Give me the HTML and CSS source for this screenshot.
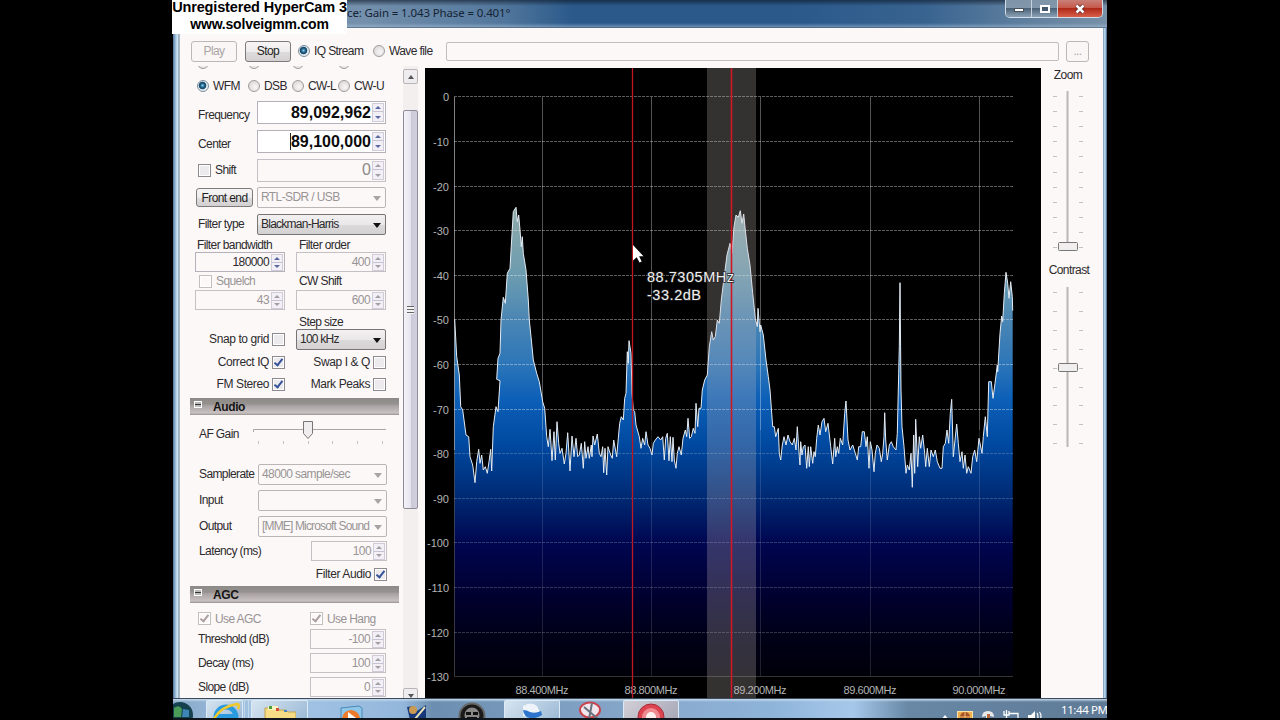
FILE: index.html
```html
<!DOCTYPE html>
<html lang="en">
<head>
  <meta charset="UTF-8">
  <title>SDR Receiver</title>
  <link rel="stylesheet" href="styles.css">
</head>
<body>

<div class="desktop">
  <div class="watermark">
    <div class="wm-name">Unregistered HyperCam 3</div>
    <div class="wm-site">www.solveigmm.com</div>
  </div>

  <div class="window">
    <div class="titlebar">
      <span class="title">ce: Gain = 1.043 Phase = 0.401°</span>
      <div class="win-buttons">
        <span class="win-btn"><svg width="12" height="8"><rect x="1.5" y="3.500" width="9" height="3" fill="#fff" stroke="#49535f"/></svg></span>
        <span class="win-btn"><svg width="12" height="10"><rect x="2" y="2" width="8" height="6" fill="#46586c" stroke="#fff" stroke-width="2"/></svg></span>
        <span class="win-btn close"><svg width="12" height="10"><path d="M2.500 1.500L9.500 8.500M9.500 1.500L2.500 8.500" stroke="#5b2020" stroke-width="4"/><path d="M2.500 1.500L9.500 8.500M9.500 1.500L2.500 8.500" stroke="#fff" stroke-width="2.500"/></svg></span>
      </div>
    </div>

    <div class="client">
      <div class="toolbar">
        <button class="btn disabled">Play</button>
        <button class="btn stop">Stop</button>
        <label class="opt iq"><i class="radio on"></i>IQ Stream</label>
        <label class="opt wave"><i class="radio"></i>Wave file</label>
        <div class="path-box"></div>
        <button class="btn browse disabled">...</button>
      </div>

      <div class="main">
        <div class="panel">
          <div class="modes cut"><i class="radio"></i><i class="radio"></i><i class="radio"></i><i class="radio"></i></div>
          <div class="modes">
            <label class="opt"><i class="radio on"></i>WFM</label>
            <label class="opt"><i class="radio"></i>DSB</label>
            <label class="opt"><i class="radio"></i>CW-L</label>
            <label class="opt"><i class="radio"></i>CW-U</label>
          </div>
          <div class="row tall"><span class="low">Frequency</span><div class="num big">89,092,962<i class="spin"></i></div></div>
          <div class="row tall"><span class="low">Center</span><div class="num big"><b class="caret"></b>89,100,000<i class="spin"></i></div></div>
          <div class="row shift"><label class="opt"><i class="check"></i>Shift</label><div class="num big off">0<i class="spin"></i></div></div>
          <div class="row front"><button class="btn small">Front end</button><div class="select off">RTL-SDR / USB</div></div>
          <div class="row"><span>Filter type</span><div class="select">Blackman-Harris</div></div>

          <div class="pair names"><span>Filter bandwidth</span><span>Filter order</span></div>
          <div class="pair"><div class="num">180000<i class="spin"></i></div><div class="num off">400<i class="spin"></i></div></div>
          <div class="pair squelch"><label class="opt off"><i class="check"></i>Squelch</label><span>CW Shift</span></div>
          <div class="pair"><div class="num off">43<i class="spin"></i></div><div class="num off">600<i class="spin"></i></div></div>
          <div class="pair names step"><span></span><span>Step size</span></div>
          <div class="pair"><label class="opt end">Snap to grid<i class="check"></i></label><div class="select">100 kHz</div></div>
          <div class="pair flags first"><label class="opt end">Correct IQ<i class="check on"></i></label><label class="opt end">Swap I &amp; Q<i class="check"></i></label></div>
          <div class="pair flags"><label class="opt end">FM Stereo<i class="check on"></i></label><label class="opt end">Mark Peaks<i class="check"></i></label></div>

          <div class="section audio"><i class="fold"></i>Audio</div>
          <div class="row aud gain">
            <span>AF Gain</span>
            <svg class="gain-slider" width="134" height="38" viewBox="253 416 134 38">
              <path d="M253.500 433V430.500H386" fill="none" stroke="#aaa6a6"/>
              <path d="M258.500 442v3M283.500 442v3M308.500 442v3M332.500 442v3M357.500 442v3M382.500 442v3" stroke="#c9c4c4"/>
              <path d="M303.500 422.500h9v12l-4.500 5l-4.500-5z" fill="#efeded" stroke="#777"/>
            </svg>
          </div>
          <div class="row aud"><span>Samplerate</span><div class="select off">48000 sample/sec</div></div>
          <div class="row aud"><span>Input</span><div class="select off"></div></div>
          <div class="row aud"><span>Output</span><div class="select off device">[MME] Microsoft Sound</div></div>
          <div class="row aud latency"><span>Latency (ms)</span><div class="num off">100<i class="spin"></i></div></div>
          <div class="row aud filter-audio"><label class="opt end">Filter Audio<i class="check on"></i></label></div>

          <div class="section agc"><i class="fold"></i>AGC</div>
          <div class="row use"><label class="opt off"><i class="check on"></i>Use AGC</label><label class="opt off hang"><i class="check on"></i>Use Hang</label></div>
          <div class="row level"><span>Threshold (dB)</span><div class="num off">-100<i class="spin"></i></div></div>
          <div class="row level"><span>Decay (ms)</span><div class="num off">100<i class="spin"></i></div></div>
          <div class="row level"><span>Slope (dB)</span><div class="num off">0<i class="spin"></i></div></div>
        </div>

        <div class="scrollbar">
          <div class="sb-btn up"></div>
          <div class="sb-thumb"><i class="grip"></i></div>
          <div class="sb-btn down"></div>
        </div>

        <svg class="spectrum" id="spectrum" width="616" height="630" viewBox="425 68 616 630">
          <defs>
            <linearGradient id="level" gradientUnits="userSpaceOnUse" x1="0" y1="97" x2="0" y2="676">
              <stop offset="0" stop-color="#c8d0c0"/>
              <stop offset="0.190" stop-color="#8fabaa"/>
              <stop offset="0.310" stop-color="#6b9bb0"/>
              <stop offset="0.385" stop-color="#4a86b4"/>
              <stop offset="0.460" stop-color="#2d76b8"/>
              <stop offset="0.520" stop-color="#0d60b8"/>
              <stop offset="0.600" stop-color="#0049a0"/>
              <stop offset="0.690" stop-color="#002a74"/>
              <stop offset="0.770" stop-color="#000650"/>
              <stop offset="0.860" stop-color="#000030"/>
              <stop offset="0.930" stop-color="#000018"/>
              <stop offset="1" stop-color="#00000a"/>
            </linearGradient>
          </defs>
          <polygon id="fill" fill="url(#level)"/>
          <g id="grid"></g>
          <polyline id="trace" fill="none" stroke="#e4ecf4" stroke-width="1"/>
          <rect x="707" y="68" width="49" height="630" fill="#c8bcbc" opacity="0.26"/>
          <path d="M632.500 68V698" stroke="#c01822" stroke-width="1.300"/>
          <path d="M731.500 68V698" stroke="#d01824" stroke-width="1.600"/>
          <g class="readout">
            <text x="647" y="282" textLength="87">88.7305MHz</text>
            <text x="647" y="300" textLength="54">-33.2dB</text>
          </g>
          <path d="M633 245v15.500l3.700-3.300 2.800 5.300 2.200-1-2.600-5.200h4.400z" fill="#fff"/>
        </svg>

        <div class="sliders">
          <span>Zoom</span>
          <svg id="zoomSlider" width="40" height="172" viewBox="1048 86 40 172"></svg>
          <span>Contrast</span>
          <svg id="contrastSlider" width="40" height="172" viewBox="1048 282 40 172"></svg>
        </div>
      </div>
    </div>
  </div>

  <div class="taskbar">
    <svg class="start" width="20" height="20"><circle cx="7" cy="15" r="13" fill="#16414f"/><path d="M1 8q5-4 8 1l-1 8H1z" fill="#4c9a58"/><path d="M10 9l6 1v7h-7z" fill="#3d86b5"/></svg>
    <div class="task lit ie"><svg width="36" height="20"><circle cx="19" cy="16" r="10" fill="none" stroke="#2b9be0" stroke-width="5"/><path d="M11 15h17" stroke="#2b9be0" stroke-width="4"/><path d="M6 20Q12 6 30 3q3 0 1 5" fill="none" stroke="#f1c92c" stroke-width="2.500"/></svg></div>
    <div class="stack"></div>
    <div class="task lit files"><svg width="32" height="20"><path d="M1 20V7h9l2 2h10l2 2h8v9z" fill="#f6dc85" stroke="#c4a24c"/><path d="M4 5h10v4H4z" fill="#fff3c0"/><path d="M5 5h3v3H5z" fill="#4a9c3c"/><path d="M12 7h3v3h-3z" fill="#d94a3a"/><path d="M20 9h3v2h-3z" fill="#4a88c8"/></svg></div>
    <svg class="ico wmp" width="26" height="20"><path d="M2 20V8l18-2 3 2v12z" fill="#8ec6e8" stroke="#4989b8"/><circle cx="12" cy="19" r="9" fill="#ee7a2b"/><path d="M9 12l8 6H9z" fill="#fff"/></svg>
    <svg class="ico person" width="22" height="20"><path d="M1 7l6-1 4 5 9-6v15H4z" fill="#16387a"/><circle cx="7" cy="10" r="4" fill="#c99a52"/><path d="M9 19L19 7" stroke="#e6e1b8" stroke-width="2"/></svg>
    <svg class="ico skull" width="28" height="20"><circle cx="14" cy="16" r="12.500" fill="#1a1a1a" stroke="#666" stroke-width="2"/><circle cx="14" cy="15" r="7.500" fill="#888"/><path d="M8 12h5v3H8zM15 12h5v3h-5zM9 17h10v3H9z" fill="#111"/></svg>
    <div class="task lit sdr"><svg width="24" height="20"><path d="M3 5q8-5 14 0l4 8q-8 5-18 2z" fill="#eef4fa"/><path d="M3 9q4 0 7 2 5 2 11-1l1 4q-6 4-12 3-6-1-7-8z" fill="#2c74cc"/></svg></div>
    <svg class="ico snip" width="26" height="20"><ellipse cx="13" cy="10" rx="10" ry="7.500" fill="#f0e6ec" stroke="#c8434c" stroke-width="2"/><path d="M7 7l14 12M15 3l-3 16" stroke="#68727e" stroke-width="2"/></svg>
    <div class="task lit rec"><svg width="28" height="20"><circle cx="14" cy="16" r="13" fill="#dd4450" stroke="#a82c38"/><circle cx="14" cy="16" r="9" fill="#ee8a90"/><circle cx="14" cy="16" r="5" fill="#fff0f0"/></svg></div>
    <div class="tray">
      <svg width="8" height="20"><path d="M0 20l4-5 4 5z" fill="#fff"/></svg>
      <svg width="16" height="20"><rect x="0.500" y="11.500" width="15" height="10" fill="#eeb04e" stroke="#fbe3a6"/><circle cx="8" cy="17" r="5" fill="#a8532a"/><path d="M3 17h10M8 12v8" stroke="#f4c46a"/></svg>
      <svg width="14" height="20"><path d="M1 17q0-6 6-6t6 6l-4-1v4H5v-4z" fill="#e8e8e8"/><path d="M6 14h3v6H6z" fill="#b86a3c"/></svg>
      <svg width="16" height="20"><path d="M1 11v4h5v-4M3.500 10v10M6 13.500h9v6H8" fill="none" stroke="#fff" stroke-width="1.300"/></svg>
      <svg width="16" height="20"><path d="M1 15h3l4-4v9H1z" fill="#fff"/><path d="M10 13q2 3 0 7M12.500 12q3 4 0 8" fill="none" stroke="#fff" stroke-width="1.200"/></svg>
    </div>
    <div class="clock">11:44 PM</div>
  </div>
</div>

<script src="script.js"></script>
</body>
</html>
```
FILE: styles.css
```css
body {
  margin: 0;
  width: 1280px;
  height: 720px;
  overflow: hidden;
  background: #000;
  font-family: "Liberation Sans", Arial, sans-serif;
  font-size: 12px;
  letter-spacing: -0.6px;
  color: #2c2a2c;
}
* {
  box-sizing: border-box;
}
svg {
  display: block;
  flex: none;
}
.desktop {
  position: relative;
  width: 934px;
  height: 720px;
  margin-left: 173px;
}
.watermark {
  position: absolute;
  left: -1px;
  top: 0;
  width: 175px;
  height: 34px;
  background: #fff;
  color: #000;
  font-weight: bold;
  text-align: center;
  white-space: nowrap;
  letter-spacing: 0;
}
.wm-name {
  font-size: 14.5px;
  line-height: 15px;
  letter-spacing: -0.15px;
}
.wm-site {
  font-size: 14px;
  line-height: 19px;
  letter-spacing: -0.2px;
}

/* window */
.window {
  height: 698px;
  padding: 0 4px 0 7px;
  background: linear-gradient(to right, #54779b 0, #a9cbe4 3px, #dcecf6 5px, #5b7693 6px, #fcf8f8 7px, #fcf8f8 929px, #5d7892 930px, #bcdcf2 931px, #8fb4d2 933px, #2b4257 934px);
}
.titlebar {
  display: flex;
  justify-content: space-between;
  height: 28px;
  margin: 0 -4px 0 -7px;
  padding: 0 4px 0 174px;
  background: linear-gradient(rgba(10, 20, 35, 0.6) 0, rgba(10, 20, 35, 0) 6px, rgba(255, 255, 255, 0) 23px, rgba(170, 195, 220, 0.5) 27px, #33485e 28px), linear-gradient(to right, #7490ac 0, #7490ac 190px, #52779c 330px, #2a598a 400px, #2a598a 620px, #386390 750px, #5f7f9e 850px, #7890a8 934px);
}
.title {
  padding-top: 5px;
  font-family: "Noto Sans", sans-serif;
  font-size: 11.5px;
  line-height: 16px;
  letter-spacing: -0.13px;
  color: #152334;
}
.win-buttons {
  display: flex;
  height: 18px;
  border: 1px solid #d2dce6;
  border-top: 0;
  border-radius: 0 0 5px 5px;
  overflow: hidden;
}
.win-btn {
  display: flex;
  align-items: center;
  justify-content: center;
  width: 26px;
  border-right: 1px solid #c8d2dc;
  background: linear-gradient(#7e94a8 0, #8297aa 45%, #4b6277 50%, #8ba2b6 100%);
}
.win-btn.close {
  width: 44px;
  border: 0;
  background: linear-gradient(#c98078 0, #c65a4c 45%, #b02818 50%, #d8604a 100%);
}
.client {
  height: 670px;
  background: #fcf8f8;
}

/* toolbar */
.toolbar {
  display: flex;
  align-items: center;
  height: 38px;
  padding: 8px 14px 0 11px;
}
.btn {
  flex: none;
  width: 46px;
  height: 21px;
  padding: 0;
  border: 1px solid #7d7a7c;
  border-radius: 3px;
  background: linear-gradient(#f6f4f4 0, #eeecec 50%, #dedcdc 51%, #d2d0d0 100%);
  font: inherit;
  letter-spacing: inherit;
  color: #222;
}
.btn.disabled {
  border-color: #bdb8b8;
  background: #faf6f6;
  color: #aaa5a5;
}
.btn.stop {
  margin-left: 8px;
}
.btn.browse {
  width: 23px;
  margin-left: 7px;
}
.btn.small {
  width: 57px;
  height: 19px;
}
.opt {
  display: flex;
  align-items: center;
  gap: 4px;
  white-space: nowrap;
}
.opt.iq {
  width: 75px;
  margin-left: 7px;
}
.opt.wave {
  width: 73px;
}
.path-box {
  flex: 1;
  height: 19px;
  border: 1px solid #c2bdbd;
  border-radius: 2px;
}
.radio {
  flex: none;
  width: 12px;
  height: 12px;
  border: 1px solid #a09c9c;
  border-radius: 50%;
  background: radial-gradient(circle at 60% 60%, #f8f6f6, #d2d0d0);
}
.radio.on {
  border-color: #7d8e9c;
  background: radial-gradient(circle at 45% 45%, #8fd0ee 0, #1f6288 2px, #17476a 3.400px, #e4ecf0 4.200px);
}
.check {
  flex: none;
  position: relative;
  width: 13px;
  height: 13px;
  border: 1px solid #8d8b8f;
  background: #eceaec;
  box-shadow: inset 0 0 0 1px #fff;
}
.check.on::after {
  content: "";
  position: absolute;
  left: 3px;
  top: 0;
  width: 3px;
  height: 7px;
  border: solid #35529c;
  border-width: 0 2px 2px 0;
  transform: rotate(38deg);
}
.off {
  color: #989494;
}
.off .check {
  border-color: #c4bfbf;
  background: #fcf8f8;
}
.off .check.on::after {
  border-color: #aaa0a4;
}

/* left panel */
.main {
  display: flex;
  height: 632px;
}
.panel {
  width: 209px;
  margin-left: 10px;
  overflow: hidden;
}
.modes {
  display: grid;
  grid-template-columns: 51px 44px 46px auto;
  align-items: center;
  height: 24px;
  padding-left: 7px;
}
.modes.cut {
  grid-auto-rows: 3px;
  align-items: end;
  height: 3px;
  margin-bottom: 5px;
  overflow: hidden;
}
.row,
.pair {
  display: flex;
  align-items: center;
  justify-content: space-between;
  height: 26px;
  padding: 0 13px 0 8px;
  white-space: nowrap;
}
.row.tall {
  height: 29px;
}
.low {
  padding-top: 5px;
}
.row.shift {
  height: 28px;
}
.row.front {
  height: 27px;
  padding-left: 6px;
}
.pair {
  height: 20px;
  padding-left: 5px;
}
.pair > * {
  width: 90px;
}
.pair.names {
  height: 15px;
}
.names span,
.squelch span {
  padding-left: 2px;
}
.names span + span,
.squelch span {
  padding-left: 3px;
}
.pair.squelch {
  height: 18px;
}
.squelch .opt {
  padding-left: 4px;
}
.pair.step {
  margin-top: 4px;
}
.pair.flags {
  height: 22px;
}
.pair.flags.first {
  margin-top: 2px;
}
.opt.end {
  justify-content: flex-end;
  gap: 3px;
  letter-spacing: -0.4px;
}
.num {
  display: flex;
  align-items: center;
  justify-content: flex-end;
  width: 76px;
  height: 20px;
  padding-right: 1px;
  border: 1px solid #b4b1ba;
}
.pair .num {
  width: 90px;
}
.num.off {
  border-color: #c4c0c6;
}
.num.big {
  width: 129px;
  height: 23px;
  font-size: 16px;
  line-height: 18px;
  font-weight: bold;
  letter-spacing: 0;
  color: #0c0c0c;
  background: #fff;
}
.num.big.off {
  background: none;
  font-weight: normal;
  color: #8c8888;
}
.caret {
  width: 1px;
  height: 17px;
  background: #222;
}
.spin {
  position: relative;
  width: 12px;
  height: 17px;
  margin-left: 2px;
  border: 1px solid #cfccd8;
  background: linear-gradient(#f2f0f6 7px, #c6c3d0 7px, #c6c3d0 8px, #f2f0f6 8px);
}
.big .spin {
  height: 19px;
  margin-left: 1px;
}
.spin::before,
.spin::after {
  content: "";
  position: absolute;
  left: 2px;
  top: 2px;
  border: 3px solid transparent;
  border-top-width: 0;
  border-bottom: 3px solid #5a68a0;
}
.spin::after {
  top: auto;
  bottom: 2px;
  border: 3px solid transparent;
  border-bottom-width: 0;
  border-top: 3px solid #5a68a0;
}
.off .spin::before {
  border-bottom-color: #a39ea4;
}
.off .spin::after {
  border-top-color: #a39ea4;
}
.select {
  position: relative;
  width: 129px;
  height: 21px;
  padding: 0 3px;
  border: 1px solid #777476;
  border-radius: 2px;
  background: linear-gradient(#f2f0f0 0, #eae8e8 50%, #dcdada 51%, #d3d1d1 100%);
  line-height: 19px;
  letter-spacing: -0.75px;
}
.pair .select {
  width: 90px;
}
.select::after {
  content: "";
  position: absolute;
  right: 4px;
  top: 8px;
  border: 4px solid transparent;
  border-bottom-width: 0;
  border-top: 5px solid #111;
}
.select.off {
  border-color: #bbb6b6;
  background: #fcf8f8;
  letter-spacing: -0.6px;
}
.select.off.device {
  letter-spacing: -0.84px;
}
.select.off::after {
  border-top-color: #a8a3a5;
}
.section {
  position: relative;
  height: 17px;
  padding: 1px 0 0 23px;
  background: linear-gradient(#8b8a86 0, #96918f 6px, #aba4a4 8px, #c9c1c1 15px, #96918f 17px);
  font-size: 12px;
  line-height: 16px;
  font-weight: bold;
  letter-spacing: -0.4px;
  color: #151515;
}
.section.audio {
  margin-top: 3px;
}
.section.agc {
  margin-top: 1px;
}
.fold {
  position: absolute;
  left: 4px;
  top: 3px;
  width: 8px;
  height: 7px;
  border: 1px solid #fff;
  background: linear-gradient(#bbb 2px, #333 2px, #333 3px, #bbb 3px);
}
.row.aud {
  padding: 0 12px 0 9px;
}
.row.gain {
  height: 38px;
  margin-bottom: 8px;
}
.row.latency {
  height: 24px;
}
.row.filter-audio {
  height: 22px;
  justify-content: flex-end;
}
.row.use {
  height: 24px;
  padding-top: 7px;
}
.use .hang {
  width: 76px;
}
.row.level {
  height: 24px;
}
.scrollbar {
  display: flex;
  flex-direction: column;
  width: 15px;
  margin: 0 7px 0 4px;
  padding-top: 3px;
  overflow: hidden;
  background: #f3efef;
}
.sb-btn {
  flex: none;
  display: flex;
  align-items: center;
  justify-content: center;
  height: 15px;
  border: 1px solid #b8b4b8;
  border-radius: 2px;
  background: #eeecee;
}
.sb-btn::after {
  content: "";
  border: 3px solid transparent;
  border-top-width: 0;
  border-bottom: 4px solid #555;
}
.sb-btn.down::after {
  border: 3px solid transparent;
  border-bottom-width: 0;
  border-top: 4px solid #555;
}
.sb-thumb {
  flex: none;
  display: flex;
  align-items: center;
  justify-content: center;
  height: 399px;
  margin: 26px 0 179px;
  border: 1px solid #8f8c98;
  border-radius: 2px;
  background: linear-gradient(to right, #f4f2f8 0, #e6e4ee 50%, #cbc9d8 55%, #d2d0de 100%);
}
.grip {
  width: 7px;
  height: 8px;
  background: repeating-linear-gradient(#666 0, #666 1px, #f4f4f4 1px, #f4f4f4 3px);
}

/* spectrum */
.spectrum {
  margin-top: 2px;
  background: #000;
  letter-spacing: 0;
}
.axis {
  fill: #b4b4b4;
  font-size: 11px;
}
.readout {
  fill: #f0f0f0;
  font-size: 14.5px;
  stroke: #222;
  stroke-width: 1.5px;
  paint-order: stroke;
}
.sliders {
  display: flex;
  flex-direction: column;
  align-items: center;
  flex: 1;
  padding: 2px 8px 0 0;
}
.sliders span {
  height: 18px;
  line-height: 14px;
}
.sliders span + svg + span {
  height: 24px;
  padding-left: 2px;
  line-height: 25px;
}

/* taskbar */
.taskbar {
  display: flex;
  height: 22px;
  padding-top: 1px;
  border-top: 1px solid #3b4b5d;
  border-bottom: 2px solid #10151c;
  background: linear-gradient(#c6daea 0, rgba(140, 170, 200, 0) 3px), linear-gradient(to right, #87a8c8 0, #a6c6e6 90px, #93b7db 230px, #6c8eb0 260px, #85a6c8 450px, #8fb4da 600px, #a6c8ea 680px, #6888a6 735px, #5e7a96 934px);
  overflow: hidden;
}
.task {
  flex: none;
  display: flex;
  justify-content: center;
  border: 1px solid #dceaf6;
  border-bottom: 0;
  border-radius: 2px 2px 0 0;
  background: linear-gradient(135deg, #d6e4f0, #9dbbd6);
}
.task.rec {
  background: linear-gradient(135deg, #d2cfd6, #a8a8b8);
}
.start {
  margin-right: 13px;
}
.task.ie {
  width: 37px;
}
.stack {
  width: 5px;
  margin: 0 1px 0 1px;
  border: solid #c2d8ea;
  border-width: 0 1px;
}
.task.files {
  width: 57px;
  margin-left: 1px;
}
.ico.wmp {
  margin-left: 31px;
}
.ico.person {
  margin-left: 41px;
}
.ico.skull {
  margin-left: 30px;
}
.task.sdr {
  width: 56px;
  margin-left: 18px;
}
.ico.snip {
  margin-left: 17px;
}
.task.rec {
  width: 56px;
  margin-left: 20px;
}
.tray {
  display: flex;
  gap: 8px;
  margin-left: auto;
}
.clock {
  width: 46px;
  margin-left: 18px;
  font-family: "Noto Sans", sans-serif;
  font-size: 11.5px;
  line-height: 19px;
  letter-spacing: -0.4px;
  color: #fff;
  white-space: nowrap;
}
```
FILE: script.js
```js
const NS = 'http://www.w3.org/2000/svg';

// sweep samples, x/y in thirds of a pixel from each block's origin
const sweep = [
  { x: 420, y: 190, pts: '104,388 110,500 118,555 122,650 128,660 138,735 146,740 150,800 158,825 165,878 170,815 176,778 180,820 185,795 190,840 196,830 202,850 207,815 212,778 215,843 220,710 228,650 234,665 240,572 230,568 234,505 240,490 243,390 250,322 256,340 262,250 270,235 276,130 280,65 288,52 292,95 296,75 300,120 304,170 307,140 310,190 318,240 325,330 328,390 333,440 340,510 350,550 358,575 368,635 374,655 380,740 385,770 390,718 396,812 402,725 406,810 411,695 416,760 420,790 426,775 433,822 438,790 443,728 450,843 456,738 462,800 468,745 473,800 478,795 484,760 490,835 494,755 498,805 504,770 508,805 514,765 516,800 519,738 524,765 532,732 538,790 543,800 548,770 551,848 555,775 560,855 564,770 572,795 577,805 581,750 590,800 595,745 599,700 604,680 610,690 614,625 618,610 622,485 625,520 627,452 633,490 636,610 640,660' },
  { x: 630, y: 190, pts: '14,665 18,705 28,740 33,775 38,745 44,765 48,725 54,765 60,775 66,795 70,760 76,750 84,740 92,750 98,740 103,810 107,745 112,730 117,812 121,740 126,815 129,742 133,810 138,835 142,790 147,770 154,795 159,745 166,720 170,740 174,685 179,745 184,740 190,715 195,730 198,640 203,710 207,655 213,655 217,600 224,570 232,555 238,470 245,425 250,450 256,440 262,390 268,400 274,330 282,265 291,195 300,160 306,190 312,110 318,75 325,82 331,62 336,100 341,72 346,120 352,175 360,225 368,310 376,385 382,410 384,355 390,425 392,405 400,435 408,510 415,560 420,600 428,710 433,710 437,740 445,715 448,790 452,810 457,765 462,740 468,765 474,735 480,755 487,765 493,745 498,780 502,710 508,800 510,825 512,755 516,795 520,770 525,765 530,835 535,770 538,830 542,770 548,820 552,785 556,800 560,745 565,705 570,735 576,695 582,685 587,725 594,700' },
  { x: 800, y: 240, pts: '92,620 98,672 104,595 107,650 112,620 116,640 121,595 128,615 134,520 138,483 144,600 150,630 158,615 166,640 172,660 176,620 182,620 187,575 193,575 198,620 202,590 207,685 211,605 216,630 222,695 226,640 231,615 238,625 244,665 248,640 252,590 254,518 257,600 262,660 268,615 274,605 280,620 288,630 292,580 296,400 298,320 300,128 303,450 306,560 312,620 318,700 322,675 328,690 333,640 337,742 341,585 344,700 347,538 353,680 358,590 362,625 368,585 374,640 377,680 382,625 388,680 393,630 400,650 406,630 412,665 420,685 426,685 430,620 436,610 441,570 446,610 451,520 455,478 460,650 465,600 470,552 475,610 480,665 486,635 490,685 495,645 500,700 505,680 513,700 518,650 524,630 530,665 537,595 546,640 550,590 556,530 562,590 566,425 574,425 579,475 585,430 592,375 593,395 600,280 605,228 608,245 613,160 618,97 623,130 627,175 632,125 637,170 638,212' }
];

function add(parent, tag, attrs, text) {
  const el = document.createElementNS(NS, tag);
  for (const key in attrs) el.setAttribute(key, attrs[key]);
  if (text) el.textContent = text;
  parent.appendChild(el);
  return el;
}

const points = sweep.flatMap(block => block.pts.split(' ').map(p => {
  const [x, y] = p.split(',').map(Number);
  return (block.x + x / 3).toFixed(1) + ',' + (block.y + y / 3).toFixed(1);
})).join(' ');

document.getElementById('trace').setAttribute('points', points);
document.getElementById('fill').setAttribute('points', '454.5,676 ' + points + ' 1012.700,676');

const grid = document.getElementById('grid');
for (let i = 0; i <= 13; i++) {
  const y = Math.round(96.300 + i * 44.600);
  add(grid, 'line', {
    x1: 454, x2: 1013, y1: y + 0.5, y2: y + 0.5,
    stroke: '#fff', 'stroke-opacity': i < 8 ? 0.36 : 0.2,
    'stroke-dasharray': i < 13 ? '3 1' : 'none'
  });
  add(grid, 'text', { x: 449, y: y + 4.5, 'text-anchor': 'end', class: 'axis' }, i ? String(-10 * i) : '0');
}

const bands = ['88.400MHz', '88.800MHz', '89.200MHz', '89.600MHz', '90.000MHz'];
add(grid, 'line', { x1: 454.5, x2: 454.5, y1: 97, y2: 450, stroke: '#fff', 'stroke-opacity': 0.5 });
add(grid, 'line', { x1: 454.5, x2: 454.5, y1: 450, y2: 676, stroke: '#fff', 'stroke-opacity': 0.22 });
bands.forEach((name, i) => {
  const x = Math.round(542 + i * 109.200) + 0.5;
  add(grid, 'line', { x1: x, x2: x, y1: 97, y2: 430, stroke: '#fff', 'stroke-opacity': 0.33 });
  add(grid, 'line', { x1: x, x2: x, y1: 430, y2: 676, stroke: '#fff', 'stroke-opacity': 0.13 });
  add(grid, 'text', { x: x - 0.5, y: 694, 'text-anchor': 'middle', textLength: 53, class: 'axis' }, name);
});

function drawSlider(id, top, bottom, firstTick, step, count, thumb) {
  const svg = document.getElementById(id);
  add(svg, 'path', { d: `M1067.5 ${top}V${bottom}`, stroke: '#bab6b6', 'stroke-width': 2 });
  for (let i = 0; i < count; i++) {
    const y = Math.round(firstTick + i * step) + 0.5;
    add(svg, 'path', { d: `M1053 ${y}h4M1079 ${y}h4`, stroke: '#c4c0c0' });
  }
  add(svg, 'rect', { x: 1058.5, y: thumb - 4, width: 19, height: 8, rx: 1, fill: '#f0eeee', stroke: '#777' });
}

drawSlider('zoomSlider', 91, 247, 96, 15.1, 11, 246.5);
drawSlider('contrastSlider', 287, 447, 292, 18.9, 9, 367.5);
```
